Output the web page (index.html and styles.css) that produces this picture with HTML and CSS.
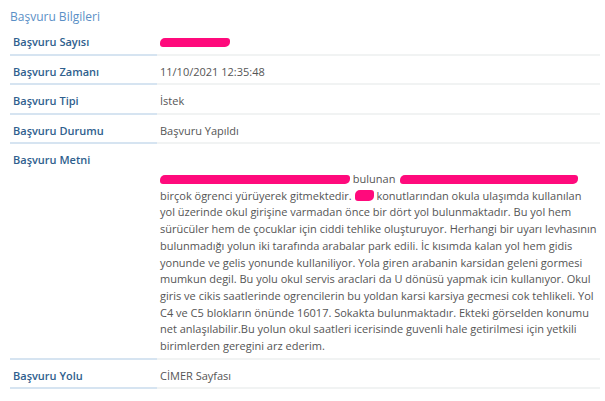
FILE: index.html
```html
<!DOCTYPE html>
<html lang="tr">
<head>
<meta charset="utf-8">
<title>Başvuru Bilgileri</title>
<link rel="stylesheet" href="styles.css">
</head>
<body>
<div class="panel">
  <div class="title">Başvuru Bilgileri</div>
  <div class="row">
    <div class="label">Başvuru Sayısı</div>
    <div class="value"><span class="redact r1"></span></div>
  </div>
  <div class="row">
    <div class="label">Başvuru Zamanı</div>
    <div class="value">11/10/2021 12:35:48</div>
  </div>
  <div class="row">
    <div class="label">Başvuru Tipi</div>
    <div class="value">İstek</div>
  </div>
  <div class="row">
    <div class="label">Başvuru Durumu</div>
    <div class="value">Başvuru Yapıldı</div>
  </div>
  <div class="row">
    <div class="label">Başvuru Metni</div>
    <div class="value text"><span class="redact r2"></span> bulunan <span class="redact r3"></span><br>birçok ögrenci yürüyerek gitmektedir. <span class="redact r4"></span> konutlarından okula ulaşımda kullanılan<br>yol üzerinde okul girişine varmadan önce bir dört yol bulunmaktadır. Bu yol hem<br>sürücüler hem de çocuklar için ciddi tehlike oluşturuyor. Herhangi bir uyarı levhasının<br>bulunmadığı yolun iki tarafında arabalar park edili. İc kısımda kalan yol hem gidis<br>yonunde ve gelis yonunde kullaniliyor. Yola giren arabanin karsidan geleni gormesi<br>mumkun degil. Bu yolu okul servis araclari da U dönüsü yapmak icin kullanıyor. Okul<br>giris ve cikis saatlerinde ogrencilerin bu yoldan karsi karsiya gecmesi cok tehlikeli. Yol<br>C4 ve C5 blokların önünde 16017. Sokakta bulunmaktadır. Ekteki görselden konumu<br>net anlaşılabilir.Bu yolun okul saatleri icerisinde guvenli hale getirilmesi için yetkili<br>birimlerden geregini arz ederim.</div>
  </div>
  <div class="row">
    <div class="label">Başvuru Yolu</div>
    <div class="value">CİMER Sayfası</div>
  </div>
</div>
</body>
</html>
```
FILE: styles.css
```css
* { box-sizing: border-box; }
html, body {
  margin: 0;
  padding: 0;
  background: #ffffff;
}
body {
  font-family: "Open Sans", "Noto Sans", sans-serif;
  font-size: 11px;
  color: #555555;
}
.panel {
  padding: 9px 5px 0 10px;
}
.title {
  color: #5a8fc6;
  font-size: 12px;
  line-height: 16px;
  height: 17px;
}
.row {
  display: flex;
}
.label {
  width: 147px;
  flex: none;
  padding: 8px 3px 3px 3px;
  line-height: 16.5px;
  font-weight: 600;
  color: #2f5f8e;
  border-bottom: 2px solid #d6e4f1;
}
.value {
  flex: 1;
  padding: 8px 3px 3px 3px;
  line-height: 16.5px;
  color: #555555;
  border-bottom: 2px solid #f1f3f3;
  white-space: nowrap;
}
.value.text {
  padding-top: 27px;
  line-height: 16.7px;
  padding-bottom: 3px;
}
.redact {
  display: inline-block;
  height: 9px;
  background: #ff0a7c;
  border-radius: 5px 3px 5px 3px;
  vertical-align: -1px;
}
.r1 { width: 70px; }
.r2 { width: 190px; }
.r3 { width: 178px; margin-left: 2px; }
.r4 { width: 19px; height: 11px; }
```
